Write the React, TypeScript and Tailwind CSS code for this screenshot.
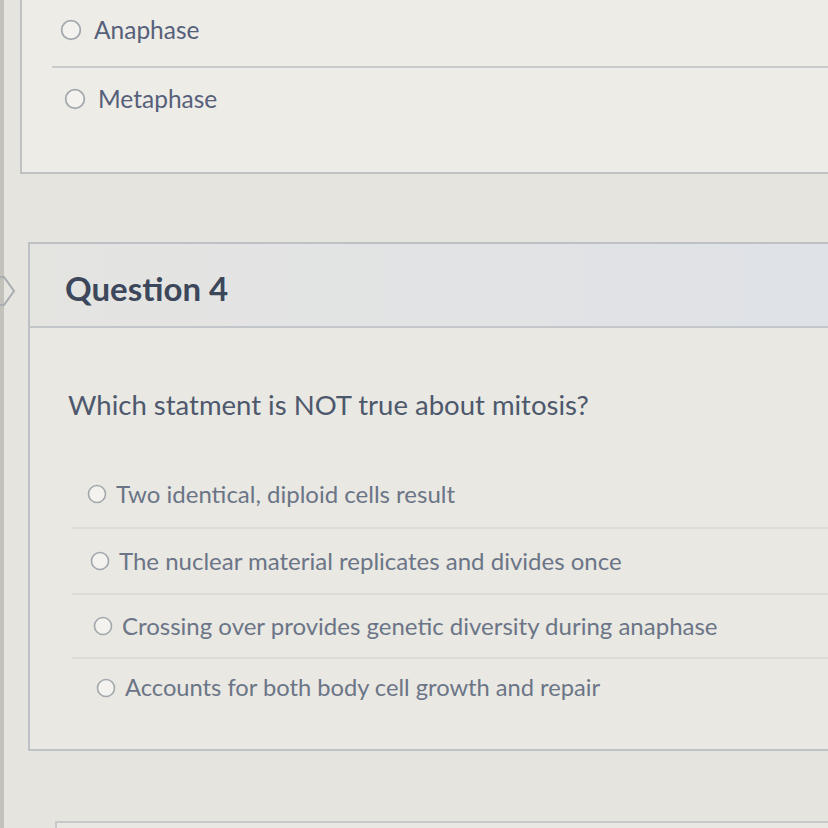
import React from 'react';

const answers = [
  { text: 'Two identical, diploid cells result', pad: 'pl-[15px]', size: 'text-[24px]', h: 'h-[66px]' },
  { text: 'The nuclear material replicates and divides once', pad: 'pl-[18px]', size: 'text-[24px]', h: 'h-[66px]' },
  { text: 'Crossing over provides genetic diversity during anaphase', pad: 'pl-[21px]', size: 'text-[24px]', h: 'h-[64px]' },
  { text: 'Accounts for both body cell growth and repair', pad: 'pl-[24px]', size: 'text-[23.7px]', h: 'h-[60px]' },
];

function Radio({ size = 20 }: { size?: number }) {
  return (
    <svg width={size} height={size} viewBox="0 0 20 20" className="shrink-0">
      <circle cx="10" cy="10" r="8.5" fill="#f3f2ee" stroke="#a3a8ae" strokeWidth="1.6" />
    </svg>
  );
}

export default function App() {
  return (
    <div
      className="relative h-[828px] w-[828px] overflow-hidden bg-[#e5e4de]"
      style={{ fontFamily: 'Lato, "Open Sans", sans-serif' }}
    >
      {/* dark strip at the left edge of the photo */}
      <div className="absolute left-0 top-0 h-full w-[4px] bg-[#c2c1ba]" />

      {/* previous question, cut off at the top */}
      <div className="ml-[20px] h-[174px] border-b-2 border-l-2 border-[#bfc1c2] bg-[#edece7]">
        <div className="flex h-[66px] items-center gap-[12px] pl-[38px] pb-[6px]">
          <Radio size={22} />
          <span className="text-[24.5px] text-[#56607a]">Anaphase</span>
        </div>
        <div className="ml-[30px] border-t-2 border-[#c9cacb]" />
        <div className="flex h-[62px] items-center gap-[12px] pl-[42px]">
          <Radio size={22} />
          <span className="text-[24.5px] text-[#56607a]">Metaphase</span>
        </div>
      </div>

      {/* Question 4 */}
      <div className="relative mt-[68px] ml-[28px] border-y-2 border-l-2 border-[#bdc0c4] bg-[#e9e8e2]">
        <svg
          width="24"
          height="34"
          viewBox="0 0 24 34"
          className="absolute left-[-36px] top-[30px]"
        >
          <path d="M2 3 H10 L20 17 L10 31 H2" fill="none" stroke="#a9adb2" strokeWidth="2" />
        </svg>
        <div className="flex h-[84px] items-center border-b-2 border-[#c3c6ca] bg-gradient-to-r from-[#e4e4e1] to-[#dfe2e7] pl-[35px] pt-[7px]">
          <span className="text-[33px] font-bold text-[#3c475b]">Question 4</span>
        </div>
        <div className="pb-[32px]">
          <div className="flex h-[133px] items-center pl-[38px] pt-[20px]">
            <span className="text-[27.5px] text-[#4e586d]">Which statment is NOT true about mitosis?</span>
          </div>
          <div className="ml-[42px]">
            {answers.map((a, i) => (
              <div
                key={a.text}
                className={`flex ${a.h} items-center gap-[9px] ${a.pad} ${
                  i > 0 ? 'border-t-2 border-[#dedcd6]' : ''
                }`}
              >
                <Radio />
                <span className={`${a.size} text-[#6b7587]`}>{a.text}</span>
              </div>
            ))}
          </div>
        </div>
      </div>

      {/* next question, cut off at the bottom */}
      <div className="mt-[70px] ml-[55px] h-[40px] border-l-2 border-t-2 border-[#c6c8c9] bg-[#e9e8e3]" />
    </div>
  );
}
